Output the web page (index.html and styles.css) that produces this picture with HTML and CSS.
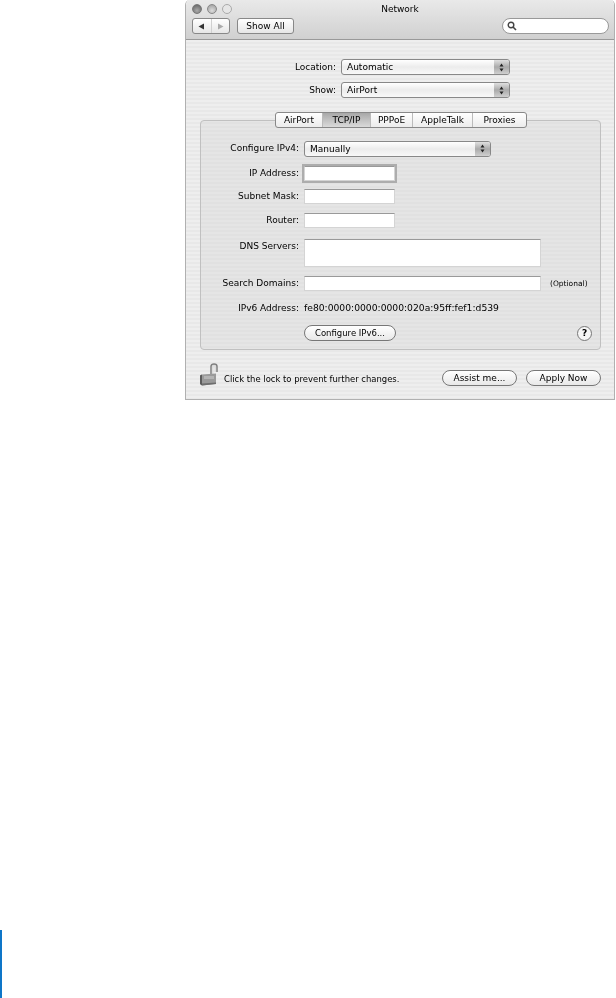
FILE: index.html
```html
<!DOCTYPE html>
<html lang="en">
<head>
    <meta charset="UTF-8">
    <meta name="viewport" content="width=device-width, initial-scale=1.0">
    <title>Network</title>
    <link rel="stylesheet" href="styles.css">
</head>
<body>

    <div class="window">
        <div class="toolbar">
            <div class="traffic">
                <span class="light dark"></span>
                <span class="light mid"></span>
                <span class="light pale"></span>
                <span class="title">Network</span>
            </div>
            <div class="toolbar-row">
                <div class="nav-btn">
                    <span class="nav-half">
                        <svg width="7" height="7" viewBox="0 0 7 7"><path d="M0.5 3.5L6 0.5V6.5Z" fill="#333"/></svg>
                    </span>
                    <span class="nav-half">
                        <svg width="7" height="7" viewBox="0 0 7 7"><path d="M6.5 3.5L1 0.5V6.5Z" fill="#aaa"/></svg>
                    </span>
                </div>
                <div class="show-all">Show All</div>
                <div class="search">
                    <svg width="10" height="10" viewBox="0 0 10 10"><circle cx="4" cy="4" r="2.8" fill="none" stroke="#444" stroke-width="1.4"/><path d="M6 6L9 9" stroke="#444" stroke-width="1.6"/></svg>
                </div>
            </div>
        </div>

        <div class="content">
            <div class="top-row">
                <span class="top-label">Location:</span>
                <div class="select top-select">Automatic<span class="stepper"><svg width="5" height="9" viewBox="0 0 5 9"><path d="M2.5 0.5L4.5 3.5H0.5ZM2.5 8.5L4.5 5.5H0.5Z" fill="#222"/></svg></span></div>
            </div>
            <div class="top-row">
                <span class="top-label">Show:</span>
                <div class="select top-select">AirPort<span class="stepper"><svg width="5" height="9" viewBox="0 0 5 9"><path d="M2.5 0.5L4.5 3.5H0.5ZM2.5 8.5L4.5 5.5H0.5Z" fill="#222"/></svg></span></div>
            </div>

            <div class="tab-area">
                <div class="tabs">
                    <span class="tab tab-airport">AirPort</span>
                    <span class="tab tab-tcp active">TCP/IP</span>
                    <span class="tab tab-pppoe">PPPoE</span>
                    <span class="tab tab-talk">AppleTalk</span>
                    <span class="tab tab-proxies">Proxies</span>
                </div>
                <div class="tab-box">
                    <div class="form-row row-configure">
                        <span class="label">Configure IPv4:</span>
                        <div class="select ipv4-select">Manually<span class="stepper"><svg width="5" height="9" viewBox="0 0 5 9"><path d="M2.5 0.5L4.5 3.5H0.5ZM2.5 8.5L4.5 5.5H0.5Z" fill="#222"/></svg></span></div>
                    </div>
                    <div class="form-row row-ip">
                        <span class="label">IP Address:</span>
                        <div class="field short focused"></div>
                    </div>
                    <div class="form-row row-subnet">
                        <span class="label">Subnet Mask:</span>
                        <div class="field short"></div>
                    </div>
                    <div class="form-row row-router">
                        <span class="label">Router:</span>
                        <div class="field short"></div>
                    </div>
                    <div class="form-row row-dns">
                        <span class="label">DNS Servers:</span>
                        <div class="field long tall"></div>
                    </div>
                    <div class="form-row row-search">
                        <span class="label">Search Domains:</span>
                        <div class="field long"></div>
                        <span class="optional">(Optional)</span>
                    </div>
                    <div class="form-row row-ipv6">
                        <span class="label">IPv6 Address:</span>
                        <span class="value">fe80:0000:0000:0000:020a:95ff:fef1:d539</span>
                    </div>
                    <div class="form-row row-button">
                        <span class="label"></span>
                        <div class="pill configure-btn">Configure IPv6...</div>
                        <div class="help">?</div>
                    </div>
                </div>
            </div>

            <div class="footer">
                <svg class="lock" width="20" height="24" viewBox="0 0 20 24">
                    <path d="M11 11V3.5C11 1.8 12.2 1 14 1S17 1.8 17 3.5V9" fill="none" stroke="#808080" stroke-width="1.5"/>
                    <path d="M12.8 11V3.8C12.8 3 13.2 2.6 14 2.6S15.2 3 15.2 3.8V9" fill="none" stroke="#d4d4d4" stroke-width="1"/>
                    <path d="M2 11.5L16 10.5V21L2 22.5L0 21V12.5Z" fill="#9a9a9a"/>
                    <path d="M0 12.5L2 11.5V22.5L0 21Z" fill="#5c5c5c"/>
                    <path d="M4 13H14V16H4Z" fill="#b4b4b4"/>
                    <path d="M2 20.5L16 19.5V21L2 22.5Z" fill="#6e6e6e"/>
                </svg>
                <span class="lock-text">Click the lock to prevent further changes.</span>
                <div class="pill footer-btn assist">Assist me...</div>
                <div class="pill footer-btn">Apply Now</div>
            </div>
        </div>
    </div>

    <div class="page-bar"></div>

</body>
</html>
```

FILE: styles.css
```css
html, body {
    height: 100%;
}
body {
    margin: 0;
    background: white;
    font-family: "DejaVu Sans", sans-serif;
    font-size: 9px;
    color: #000;
    display: flex;
    flex-direction: column;
    overflow: hidden;
}
.window {
    box-sizing: border-box;
    margin-left: 185px;
    width: 430px;
    height: 400px;
    border: 1px solid #b0b0b0;
    border-top: none;
    border-radius: 5px 5px 0 0;
    filter: blur(0.4px);
}
.toolbar {
    box-sizing: border-box;
    height: 40px;
    padding: 2px 5px 0 6px;
    background: linear-gradient(#e9e9e9, #d0d0d0);
    border-bottom: 1px solid #999;
    border-radius: 5px 5px 0 0;
}
.traffic {
    display: flex;
    align-items: center;
    gap: 5px;
    height: 13px;
}
.light {
    width: 10px;
    height: 10px;
    border-radius: 50%;
    border: 1px solid #777;
    box-sizing: border-box;
}
.light.dark {
    background: radial-gradient(circle at 50% 70%, #aaa, #5e5e5e);
}
.light.mid {
    background: radial-gradient(circle at 50% 70%, #ddd, #999);
    border-color: #888;
}
.light.pale {
    background: #e6e6e6;
    border-color: #aaa;
}
.title {
    flex: 1;
    text-align: center;
    padding-right: 46px;
}
.toolbar-row {
    display: flex;
    align-items: center;
    margin-top: 3px;
}
.nav-btn {
    display: flex;
    box-sizing: border-box;
    width: 38px;
    height: 16px;
    border: 1px solid #888;
    border-radius: 3px;
    background: linear-gradient(#fff, #e6e6e6);
}
.nav-half {
    flex: 1;
    display: flex;
    align-items: center;
    justify-content: center;
}
.nav-half:first-child {
    border-right: 1px solid #d0d0d0;
}
.show-all {
    box-sizing: border-box;
    width: 57px;
    height: 16px;
    margin-left: 7px;
    line-height: 14px;
    text-align: center;
    border: 1px solid #888;
    border-radius: 3px;
    background: linear-gradient(#fff, #e6e6e6);
}
.search {
    box-sizing: border-box;
    display: flex;
    align-items: center;
    width: 107px;
    height: 16px;
    margin-left: auto;
    padding-left: 4px;
    background: white;
    border: 1px solid #999;
    border-radius: 8px;
}
.content {
    box-sizing: border-box;
    height: 359px;
    padding-top: 19px;
    background: repeating-linear-gradient(#eeeeee 0, #eeeeee 2px, #e8e8e8 2px, #e8e8e8 4px);
}
.top-row {
    display: flex;
    align-items: center;
    height: 16px;
    margin-bottom: 7px;
}
.top-label {
    width: 150px;
    padding-bottom: 1px;
    text-align: right;
    margin-right: 5px;
}
.select {
    position: relative;
    box-sizing: border-box;
    height: 16px;
    padding-left: 5px;
    line-height: 14px;
    border: 1px solid #888;
    border-radius: 3px;
    background: linear-gradient(#fff, #ececec 50%, #f8f8f8);
}
.top-select {
    width: 169px;
}
.ipv4-select {
    width: 187px;
}
.stepper {
    position: absolute;
    top: 0;
    right: 0;
    bottom: 0;
    width: 15px;
    display: flex;
    align-items: center;
    justify-content: center;
    background: linear-gradient(#e0e0e0, #aaa 50%, #cfcfcf);
    border-radius: 0 2px 2px 0;
}
.tab-area {
    position: relative;
    margin: 14px 13px 0 14px;
    padding-top: 8px;
}
.tabs {
    position: absolute;
    top: 0;
    left: 75px;
    z-index: 1;
    display: flex;
    box-sizing: border-box;
    height: 16px;
    border: 1px solid #888;
    border-radius: 3px;
    background: linear-gradient(#fff, #ececec);
}
.tab {
    box-sizing: border-box;
    line-height: 14px;
    text-align: center;
    border-right: 1px solid #bbb;
}
.tab:last-child {
    border-right: none;
}
.tab-airport { width: 47px; }
.tab-tcp { width: 48px; }
.tab-pppoe { width: 42px; }
.tab-talk { width: 60px; }
.tab-proxies { width: 53px; }
.tab.active {
    background: linear-gradient(#a8a8a8, #dadada);
}
.tab-box {
    box-sizing: border-box;
    height: 230px;
    padding-top: 20px;
    border: 1px solid #c0c0c0;
    border-radius: 4px;
    background: rgba(215, 215, 215, 0.4);
}
.form-row {
    display: flex;
    align-items: center;
}
.label {
    box-sizing: border-box;
    width: 98px;
    flex-shrink: 0;
    margin-right: 5px;
    padding-bottom: 2px;
    text-align: right;
}
.row-configure { height: 15px; }
.row-ip { height: 15px; margin-top: 10px; }
.row-subnet { height: 15px; margin-top: 8px; }
.row-router { height: 15px; margin-top: 9px; }
.row-dns { height: 28px; margin-top: 11px; align-items: flex-start; }
.row-dns .label { padding-top: 2px; }
.row-search { height: 15px; margin-top: 9px; }
.row-ipv6 { height: 15px; margin-top: 10px; }
.row-button { height: 16px; margin-top: 9px; }
.field {
    box-sizing: border-box;
    height: 100%;
    background: white;
    border: 1px solid #d4d4d4;
    border-top-color: #999;
}
.field.short {
    width: 91px;
}
.field.long {
    width: 237px;
}
.field.focused {
    outline: 2px solid #adadad;
    outline-offset: 0;
}
.optional {
    margin-left: 9px;
    font-size: 7.5px;
}
.value {
    padding-bottom: 2px;
    font-size: 9.2px;
}
.pill {
    box-sizing: border-box;
    height: 16px;
    line-height: 14px;
    text-align: center;
    border: 1px solid #777;
    border-radius: 8px;
    background: linear-gradient(#fff, #e8e8e8);
}
.configure-btn {
    width: 92px;
    font-size: 8.5px;
}
.help {
    box-sizing: border-box;
    width: 15px;
    height: 15px;
    margin: 1px 8px 0 auto;
    line-height: 13px;
    text-align: center;
    font-weight: bold;
    border: 1px solid #777;
    border-radius: 50%;
    background: #f6f6f6;
}
.footer {
    display: flex;
    align-items: flex-end;
    margin: 13px 13px 0 14px;
}
.lock {
    flex-shrink: 0;
}
.lock-text {
    margin: 0 0 3px 4px;
    font-size: 8.45px;
}
.footer-btn {
    width: 75px;
    margin-bottom: 1px;
}
.assist {
    margin-left: auto;
    margin-right: 9px;
}
.page-bar {
    width: 2px;
    height: 68px;
    margin-top: auto;
    background: #0e76c8;
}
```
